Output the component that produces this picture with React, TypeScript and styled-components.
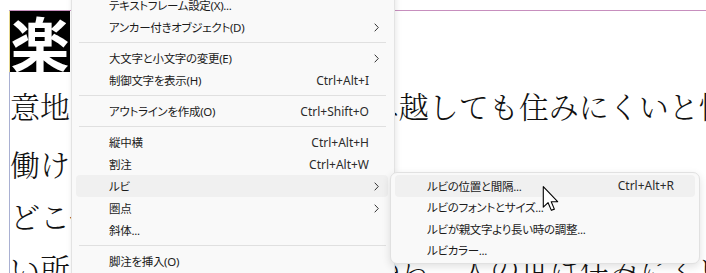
import React from "react";
import styled, { createGlobalStyle } from "styled-components";

const GlobalStyle = createGlobalStyle`
  html, body {
    margin: 0;
    padding: 0;
    background: #ffffff;
  }
  * {
    box-sizing: border-box;
  }
`;

const Screen = styled.div`
  position: relative;
  width: 706px;
  height: 273px;
  overflow: hidden;
  background: #ffffff;
`;

const Page = styled.div`
  padding: 10px 0 0 9px;
`;

const Frame = styled.div`
  border-top: 1px solid #c78fbe;
  border-left: 1px solid #a9b0d2;
  font-family: "Noto Serif CJK JP", "Noto Sans CJK JP", serif;
  font-weight: 300;
  color: #111111;
`;

const DropCap = styled.div`
  width: 60px;
  height: 61px;
  background: #000000;
  color: #ffffff;
  font-family: "Noto Sans CJK JP", sans-serif;
  font-weight: 700;
  font-size: 59px;
  line-height: 61px;
  text-align: center;
  box-shadow: -1px 0 0 #e6d890;
`;

const Line = styled.div<{ $spaced?: boolean }>`
  height: 52px;
  line-height: 52px;
  font-size: 30px;
  white-space: nowrap;
  margin-top: ${(p) => (p.$spaced ? "6px" : "0")};
`;

const FirstLine = styled(Line)`
  margin-top: 7px;
`;

const Menu = styled.div`
  position: absolute;
  left: 71px;
  top: -11px;
  width: 324px;
  padding: 4px 6px 4px 4px;
  background: #f9f9f9;
  border: 1px solid #e3e3e3;
  box-shadow: 1px 2px 6px rgba(0, 0, 0, 0.1);
  font-family: "Noto Sans", "Noto Sans CJK JP", sans-serif;
  font-size: 12px;
  color: #1b1b1b;
`;

const SubMenu = styled.div`
  position: absolute;
  left: 390px;
  top: 172px;
  width: 310px;
  padding: 2px 4px 2px 4px;
  background: #f9f9f9;
  border: 1px solid #e1e1e1;
  border-radius: 7px;
  box-shadow: 0 3px 8px rgba(0, 0, 0, 0.12);
  font-family: "Noto Sans", "Noto Sans CJK JP", sans-serif;
  font-size: 12px;
  color: #1b1b1b;
`;

const Item = styled.div<{ $active?: boolean; $height?: number }>`
  display: grid;
  grid-template-columns: 1fr auto 19px;
  align-items: center;
  height: ${(p) => p.$height ?? 22}px;
  padding-left: 33px;
  border-radius: 4px;
  background: ${(p) => (p.$active ? "#f0f0f0" : "transparent")};
  white-space: nowrap;
`;

const SubItem = styled(Item)`
  grid-template-columns: 1fr auto 21px;
  padding-left: 32px;
`;

const Label = styled.span`
  font-size: 11.5px;
  letter-spacing: -0.3px;
  font-feature-settings: "palt";
`;

const Shortcut = styled.span`
  color: #2b2b2b;
`;

const Chevron = styled.svg`
  width: 5px;
  height: 9px;
  margin-left: 5px;
`;

const Separator = styled.div`
  height: 9px;
  display: flex;
  align-items: center;
  padding: 0 2px 0 3px;

  &::after {
    content: "";
    flex: 1;
    height: 1px;
    background: #e0e0e0;
  }
`;

const Cursor = styled.svg`
  position: absolute;
  left: 542px;
  top: 186px;
  width: 19px;
  height: 26px;
`;

type Entry =
  | { kind: "sep" }
  | { kind: "item"; label: string; shortcut?: string; sub?: boolean; active?: boolean };

const mainEntries: Entry[] = [
  { kind: "item", label: "テキストフレーム設定(X)..." },
  { kind: "item", label: "アンカー付きオブジェクト(D)", sub: true },
  { kind: "sep" },
  { kind: "item", label: "大文字と小文字の変更(E)", sub: true },
  { kind: "item", label: "制御文字を表示(H)", shortcut: "Ctrl+Alt+I" },
  { kind: "sep" },
  { kind: "item", label: "アウトラインを作成(O)", shortcut: "Ctrl+Shift+O" },
  { kind: "sep" },
  { kind: "item", label: "縦中横", shortcut: "Ctrl+Alt+H" },
  { kind: "item", label: "割注", shortcut: "Ctrl+Alt+W" },
  { kind: "item", label: "ルビ", sub: true, active: true },
  { kind: "item", label: "圏点", sub: true },
  { kind: "item", label: "斜体..." },
  { kind: "sep" },
  { kind: "item", label: "脚注を挿入(O)" },
];

const rubyEntries = [
  { label: "ルビの位置と間隔...", shortcut: "Ctrl+Alt+R", active: true },
  { label: "ルビのフォントとサイズ..." },
  { label: "ルビが親文字より長い時の調整..." },
  { label: "ルビカラー..." },
];

const ChevronIcon = () => (
  <Chevron viewBox="0 0 5 9">
    <path d="M0.7 0.7 L4.3 4.5 L0.7 8.3" fill="none" stroke="#333" strokeWidth="1" />
  </Chevron>
);

const App: React.FC = () => {
  return (
    <Screen>
      <GlobalStyle />
      <Page>
        <Frame>
          <DropCap>楽</DropCap>
          <FirstLine>意地を通せば窮屈だ。どこへ越しても住みにくいと悟</FirstLine>
          <Line $spaced>働けば角が立つ。</Line>
          <Line>どこへ越しても住みにくいと悟った時、詩が</Line>
          <Line>い所へ引き越したくなる。から、人の世は住みにくい</Line>
        </Frame>
      </Page>

      <Menu>
        {mainEntries.map((e, i) =>
          e.kind === "sep" ? (
            <Separator key={i} />
          ) : (
            <Item key={i} $active={e.active}>
              <Label>{e.label}</Label>
              <Shortcut>{e.shortcut}</Shortcut>
              {e.sub ? <ChevronIcon /> : <span />}
            </Item>
          )
        )}
      </Menu>

      <SubMenu>
        {rubyEntries.map((e, i) => (
          <SubItem key={i} $active={e.active} $height={21.5}>
            <Label>{e.label}</Label>
            <Shortcut>{e.shortcut}</Shortcut>
            <span />
          </SubItem>
        ))}
      </SubMenu>

      <Cursor viewBox="0 0 13 19">
        <path
          d="M0.5 0.5 L0.5 15.5 L4 12.2 L6.4 17.8 L8.6 16.9 L6.3 11.5 L11 11.5 Z"
          fill="#ffffff"
          stroke="#000000"
          strokeWidth="0.8"
          strokeLinejoin="round"
        />
      </Cursor>
    </Screen>
  );
};

export default App;
